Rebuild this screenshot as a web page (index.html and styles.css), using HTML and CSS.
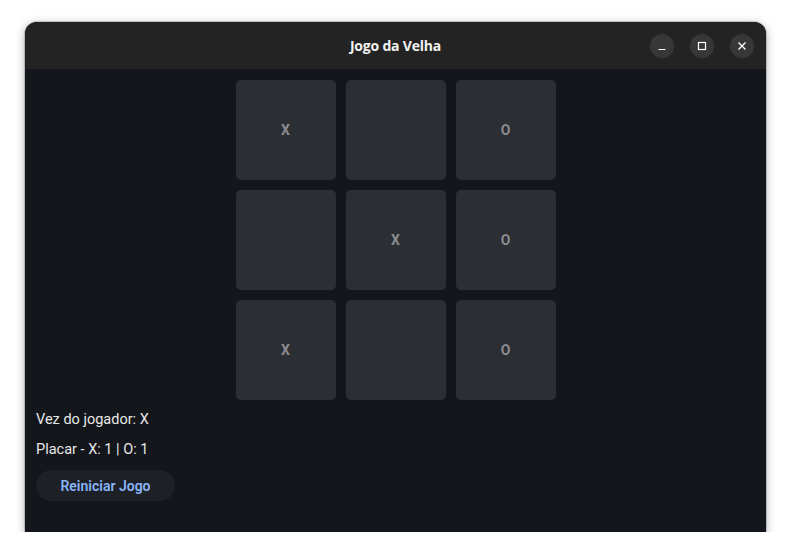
FILE: index.html
```html
<!DOCTYPE html>
<html lang="pt">
<head>
<meta charset="utf-8">
<title>Jogo da Velha</title>
<link rel="stylesheet" href="styles.css">
</head>
<body>
<div class="window">
  <header class="titlebar">
    <div class="title">Jogo da Velha</div>
    <div class="controls">
      <span class="ctl"><svg width="10" height="10" viewBox="0 0 10 10"><path d="M1.5 8.5h7" stroke="#fff" stroke-width="1.2"/></svg></span>
      <span class="ctl"><svg width="10" height="10" viewBox="0 0 10 10"><rect x="1.5" y="1.5" width="7" height="7" fill="none" stroke="#fff" stroke-width="1.2"/></svg></span>
      <span class="ctl"><svg width="10" height="10" viewBox="0 0 10 10"><path d="M1.5 1.5l7 7M8.5 1.5l-7 7" stroke="#fff" stroke-width="1.3"/></svg></span>
    </div>
  </header>
  <main class="content">
    <div class="board">
      <div class="cell">X</div>
      <div class="cell"></div>
      <div class="cell">O</div>
      <div class="cell"></div>
      <div class="cell">X</div>
      <div class="cell">O</div>
      <div class="cell">X</div>
      <div class="cell"></div>
      <div class="cell">O</div>
    </div>
    <p class="status">Vez do jogador: X</p>
    <p class="status">Placar - X: 1 | O: 1</p>
    <button class="restart">Reiniciar Jogo</button>
  </main>
</div>
</body>
</html>
```
FILE: styles.css
```css
html, body {
  margin: 0;
  padding: 0;
  background: #ffffff;
}
body {
  padding: 22px 0 0 25px;
  font-family: Roboto, "Noto Sans", sans-serif;
}
.window {
  width: 741px;
  height: 510px;
  border-radius: 12px 12px 0 0;
  overflow: hidden;
  background: #13161b;
  box-shadow: 0 2px 10px rgba(0,0,0,0.35), 0 0 0 1px rgba(0,0,0,0.15);
  display: flex;
  flex-direction: column;
}
.titlebar {
  height: 47px;
  background: #232323;
  display: flex;
  align-items: center;
  justify-content: center;
  position: relative;
  flex-shrink: 0;
}
.title {
  color: #f2f2f2;
  font-family: "Open Sans", "DejaVu Sans", sans-serif;
  font-weight: 700;
  font-size: 14px;
  letter-spacing: -0.2px;
}
.controls {
  position: absolute;
  right: 12px;
  top: 12px;
  display: flex;
  gap: 16px;
}
.ctl {
  width: 24px;
  height: 24px;
  border-radius: 50%;
  background: #373737;
  display: flex;
  align-items: center;
  justify-content: center;
}
.content {
  flex: 1;
  padding: 11px 11px 0 11px;
  display: flex;
  flex-direction: column;
  align-items: flex-start;
}
.board {
  align-self: center;
  display: grid;
  grid-template-columns: repeat(3, 100px);
  grid-template-rows: repeat(3, 100px);
  gap: 10px;
}
.cell {
  background: #2b2e33;
  border-radius: 5px;
  display: flex;
  align-items: center;
  justify-content: center;
  color: #8a8c90;
  font-family: Roboto, sans-serif;
  font-weight: 700;
  font-size: 14px;
}
.status {
  margin: 10px 0 0 0;
  color: #e8e8e8;
  font-size: 14.5px;
  line-height: 20px;
}
.status + .status {
  margin-top: 10px;
}
.restart {
  margin-top: 10px;
  width: 139px;
  height: 31px;
  border: none;
  border-radius: 16px;
  background: #1d2026;
  color: #8ab4f8;
  font-family: Roboto, sans-serif;
  font-weight: 600;
  font-size: 14px;
  padding: 0;
}
```
